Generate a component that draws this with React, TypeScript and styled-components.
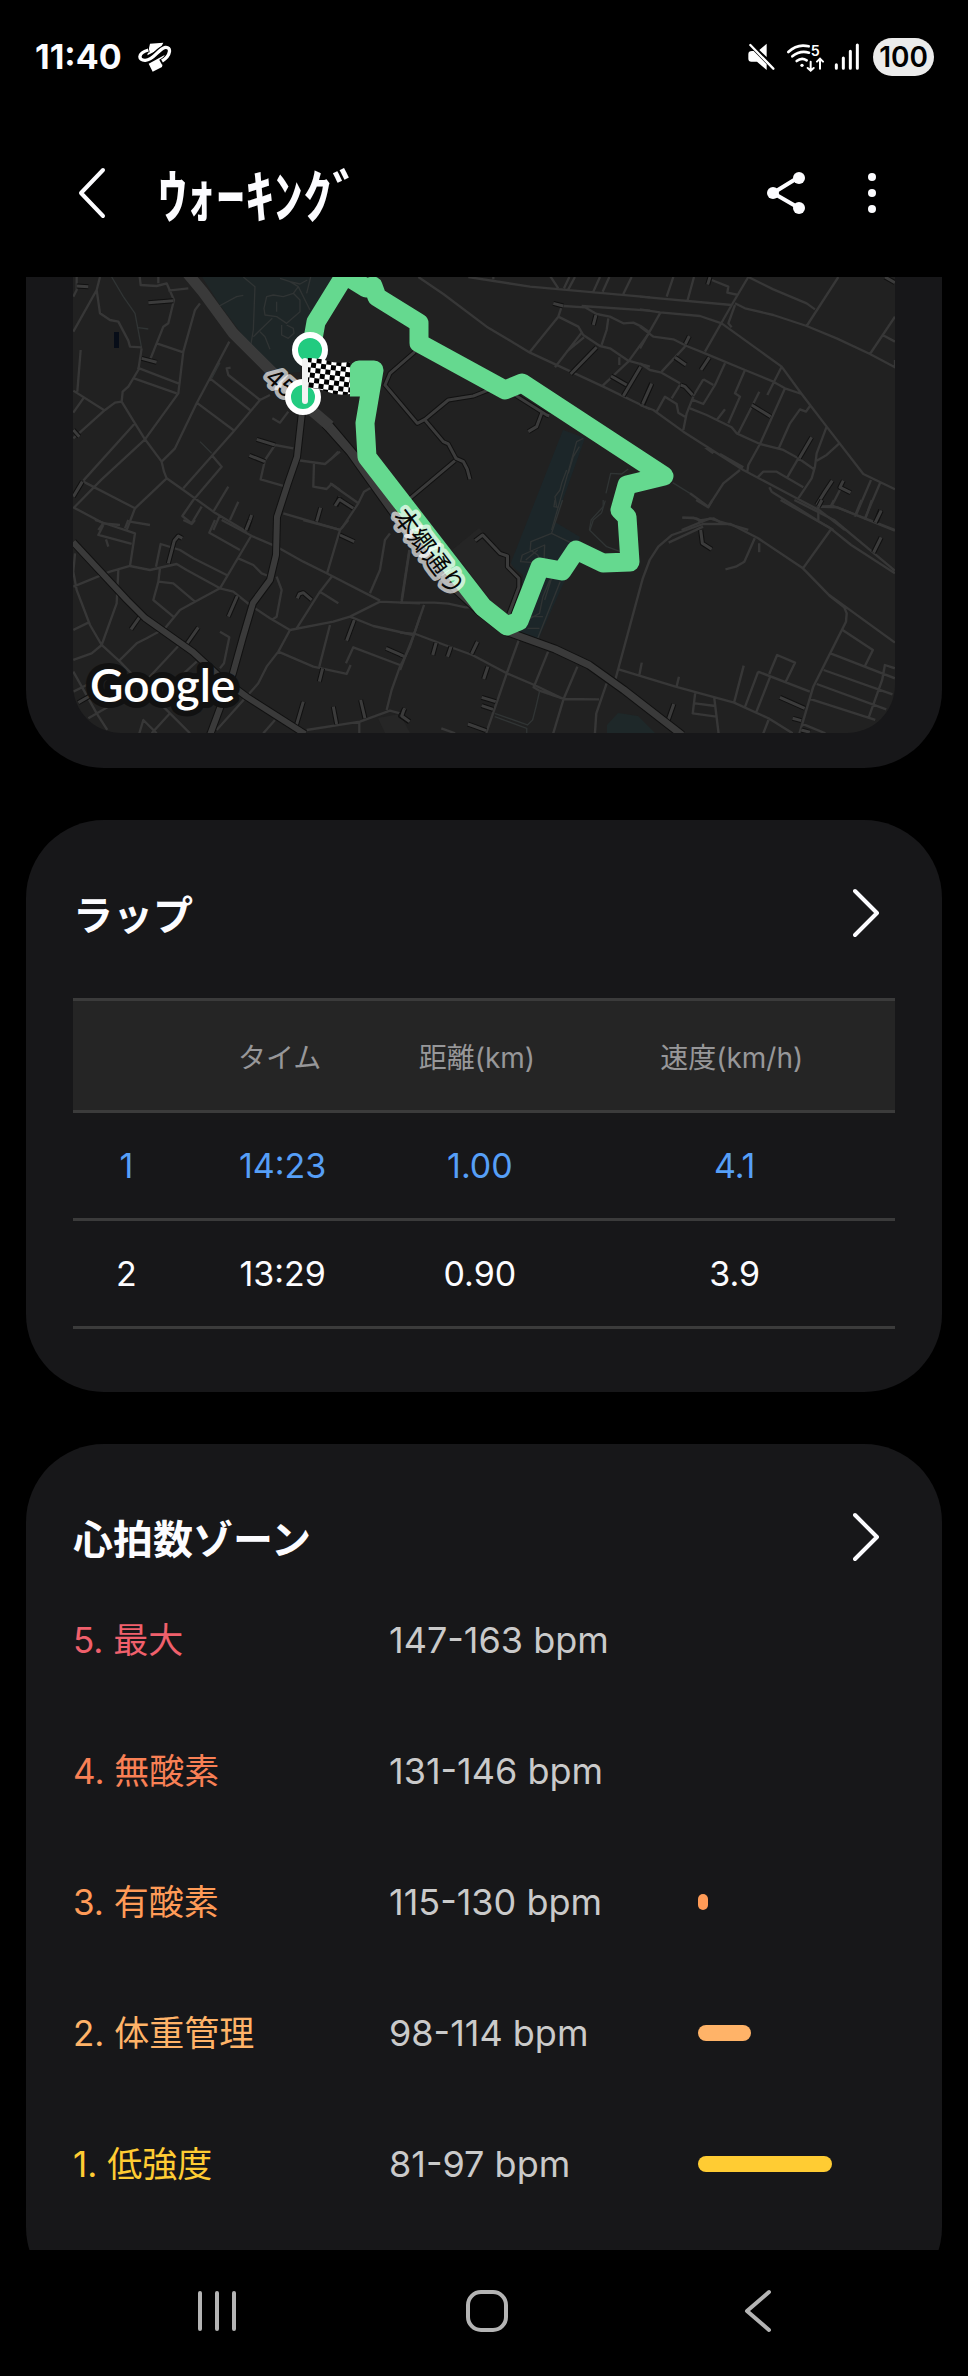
import React from "react";
import styled, { createGlobalStyle } from "styled-components";

const GlobalStyle = createGlobalStyle`
  *, *::before, *::after { box-sizing: border-box; }
  body {
    margin: 0;
    background: #000;
    color: #fcfcff;
    font-family: Inter, "Noto Sans CJK JP", sans-serif;
  }
`;

const Screen = styled.div`
  display: flex;
  flex-direction: column;
  height: 100vh;
  background: #000;
`;

const StatusBar = styled.div`
  display: flex;
  flex: none;
  align-items: center;
  justify-content: space-between;
  height: 114px;
  padding: 0 34px 0 35px;
`;

const StatusGroup = styled.div<{ $gap: number }>`
  display: flex;
  align-items: center;
  gap: ${({ $gap }) => $gap}px;
`;

const Clock = styled.time`
  font-size: 34px;
  font-weight: 700;
  line-height: 40px;
`;

const Battery = styled.span`
  margin-left: 3px;
  padding: 0 6px;
  border-radius: 19px;
  background: #ebebeb;
  color: #000;
  font-size: 28px;
  font-weight: 600;
  line-height: 38px;
`;

const AppBar = styled.header`
  display: flex;
  flex: none;
  align-items: center;
  height: 163px;
  padding: 0 68px 5px 64px;
`;

const Title = styled.h1`
  flex: 1;
  margin: 0 0 0 38px;
  font-family: "Noto Sans CJK JP", sans-serif;
  font-size: 58px;
  font-weight: 700;
  line-height: 80px;
`;

const IconButton = styled.button`
  display: flex;
  align-items: center;
  justify-content: center;
  min-width: 56px;
  height: 75px;
  padding: 0;
  border: 0;
  background: none;
  color: inherit;
`;

const Actions = styled.div`
  display: flex;
  gap: 30px;
`;

const Content = styled.main`
  display: flex;
  flex: 1;
  flex-direction: column;
  gap: 52px;
  min-height: 0;
  padding: 0 26px;
  overflow-y: auto;
  scrollbar-width: none;
`;

const Card = styled.section<{ $bottom: number; $openTop?: boolean }>`
  flex: none;
  padding: 0 47px ${({ $bottom }) => $bottom}px;
  border-radius: ${({ $openTop }) => ($openTop ? "0 0 78px 78px" : "78px")};
  background: #171719;
`;

const CardHeader = styled.div`
  display: flex;
  align-items: center;
  justify-content: space-between;
  height: 130px;
  padding-top: 55px;
`;

const CardTitle = styled.h2`
  margin: 0;
  font-family: "Noto Sans CJK JP", sans-serif;
  font-size: 40px;
  font-weight: 700;
  line-height: 60px;
`;

const MapDrawing = styled.svg`
  display: block;
  width: 100%;
  border-radius: 0 0 48px 48px;
  background: #212121;
`;

const LapTable = styled.table`
  width: 100%;
  margin-top: 48px;
  border-top: 3px solid #3b3b3b;
  border-spacing: 0;
  table-layout: fixed;
`;

const HeadCell = styled.th<{ $share: number }>`
  width: ${({ $share }) => $share}%;
  height: 112px;
  padding: 0 6px 0 0;
  border-bottom: 3px solid #3b3b3b;
  background: #252525;
  color: #979799;
  font-size: 28px;
  font-weight: 400;
`;

const LapRow = styled.tr<{ $best: boolean }>`
  color: ${({ $best }) => ($best ? "#569ff7" : "#fcfcff")};
`;

const LapCell = styled.td`
  height: 108px;
  padding: 0;
  border-bottom: 3px solid #3b3b3b;
  font-size: 34px;
  text-align: center;
`;

const ZoneList = styled.ul`
  margin: 0;
  padding: 0;
  list-style: none;
`;

const ZoneRow = styled.li`
  display: grid;
  grid-template-columns: 316fr 309fr 197fr;
  align-items: center;
  height: 131px;
  font-size: 35px;
  line-height: 52px;
`;

const ZoneName = styled.span<{ $color: string }>`
  color: ${({ $color }) => $color};
`;

const ZoneRange = styled.span`
  color: #cacaca;
  font-size: 36px;
`;

const ZoneBar = styled.span<{ $color: string }>`
  height: 16px;
  border-radius: 8px;
  background: ${({ $color }) => $color};
`;

const NavBar = styled.nav`
  display: grid;
  flex: none;
  grid-template-columns: repeat(3, 1fr);
  align-items: center;
  justify-items: center;
  height: 126px;
  padding: 0 75px 4px 82px;
  color: #b4b4b4;
`;

const laps = [
  { n: 1, time: "14:23", distance: "1.00", speed: "4.1" },
  { n: 2, time: "13:29", distance: "0.90", speed: "3.9" },
];

const zones = [
  { name: "5. 最大", range: "147-163 bpm", color: "#f0606c", share: 0 },
  { name: "4. 無酸素", range: "131-146 bpm", color: "#f98055", share: 0 },
  { name: "3. 有酸素", range: "115-130 bpm", color: "#ff9b57", share: 5 },
  { name: "2. 体重管理", range: "98-114 bpm", color: "#ffb368", share: 27 },
  { name: "1. 低強度", range: "81-97 bpm", color: "#ffcc33", share: 68 },
];

interface Tile {
  transform: string;
  streets: string;
  alleys: string;
  paths?: string;
}

const tiles: Tile[] = [
  {
    transform: "translate(20 270) scale(.3333)",
    streets:
      "M240 21L230 60L240 130L270 150L295 155L325 212L330 230L365 232M170 10V60L160 80M230 60L160 185M358 10L362 45L410 48L440 40L462 90L445 160L430 170L390 270M415 10V40M445 62L505 55M365 235L355 300L325 350L308 365L305 395L285 398L255 420L205 465L160 505M160 362L255 422M182 240L172 365M190 385L160 428M305 395L345 460L375 508L425 575L432 605L440 625L490 660L580 725L680 785M345 460L190 632M540 100L525 120L490 245L475 370L375 508L245 628L160 715M410 220L490 247M352 293L475 340M342 325L470 370M628 215L570 325L530 400L465 535L425 575M570 325L690 420M530 398L640 480M632 293L620 295L625 315L720 390M720 390L640 485L490 655M750 375L720 390M190 635L345 715L320 780M440 625L345 715M160 712L250 760L300 765M575 555L605 590L520 690L487 738L515 760L545 710M580 725L625 650M630 750L655 695M757 445L780 458L805 425M830 570L915 582L960 545M820 535L765 525L735 570L722 628L790 648M882 582L880 650L920 657L935 642L960 660M790 730L960 780M250 760L235 780M580 780L600 735",
    alleys:
      "M385 98L460 92M710 508L765 525M688 556L735 575M695 735L680 780M902 713L890 755M160 680L187 635M160 480L178 500M170 48L205 50M365 265L410 277M960 680L948 708",
    paths:
      "M275 21L310 80L345 130L365 235M355 173L385 177M670 21L705 50L700 180L692 228M598 108L650 80L670 76M740 80L760 75L790 80L820 70L840 90V125L800 160L770 140L735 135L732 115ZM770 95L770 125M757 145L700 200M720 185L735 200L750 238M785 165V195L805 205L822 190L820 175L800 165M780 25L810 35L835 50L870 120M860 70L872 21M820 70L835 50M600 278L575 325M540 515L575 550M862 30L840 42L810 35",
  },
  {
    transform: "translate(330 270) scale(.3333)",
    streets:
      "M265 21L340 72L470 170L600 248L820 350L960 418M415 21L600 50L960 82M490 10V28M755 108L960 122M700 108L765 112L800 132L840 140L880 160L910 158L935 170L960 188M695 110L685 140L600 245M685 140L745 170L760 195L810 228L840 235L895 272L960 290M755 188L675 292M762 202L710 245M835 145L830 180L815 225M958 188L895 275L815 350M868 262V285M655 10L685 55M718 21L702 55M735 21L715 58M810 21L790 65M838 21L818 65M905 21L880 72M0 640L85 700L102 665L125 652M85 700L35 775M0 570L25 545",
    alleys:
      "M255 245L180 310L165 345L245 440L262 460L285 448L355 390L430 378L480 358M285 450L340 515L355 522L378 565L400 575L412 598L420 628M375 572L240 685M555 375L650 435L658 438M635 430L620 470L595 485M15 708L28 688L70 715M670 100L700 108M800 232L722 312M843 318L890 345M932 290L880 378M798 135L790 165M965 340L938 405",
    paths:
      "M760 505L740 515L705 640L665 780M748 530L730 560L715 610M710 600L695 640L690 660L675 680L680 712M895 597L875 612L842 610L828 670M826 692L815 728L790 750L780 780",
  },
  {
    transform: "translate(640 270) scale(.3333)",
    streets:
      "M0 80L275 105M0 118L60 127L180 138L245 160L425 290L485 372L560 470L670 612L765 658M325 21L275 105L195 245M325 21L400 58L500 100L525 118M285 100L315 115L400 135L500 168L590 205L690 252L765 292V270M595 21L500 168M690 252L765 140M728 195L765 215M100 21L80 80M162 21L143 90M215 30L265 50L262 68L295 75M285 105L265 160L275 172M60 130L0 235M0 170L40 200L100 208L140 228L195 250L315 300L400 335L435 355L485 372M0 280L30 300L65 308L120 340M65 305L135 230M0 405L40 420L130 485L310 600L470 685L540 722L615 780M150 415L200 435L275 472L290 490L360 522L430 540L475 565L522 598M120 345L95 385M50 425L75 380L110 402L115 428L135 440M160 380L140 430L130 480M255 280L225 345L190 402L155 388M190 328L220 345M190 328L160 378M315 300L285 370L300 380L265 460M358 365L295 490M255 418L232 448M435 355L390 455L360 522L325 585L322 605M425 290L382 375M510 408L498 425L480 418L450 460L415 538M560 470L530 550L525 590L515 625L475 685M598 520L560 555L530 572M475 565L440 625M350 625L370 605L410 605L490 652M388 652L395 665L530 750L580 780M535 710L580 708L650 735L765 780M605 650L575 708M693 630L648 735M720 640L675 745M535 710V750M195 532L220 550M240 552L310 592M300 600L250 640L205 710L150 670M127 743L160 743L190 757M125 780L210 745L240 755L325 780",
    alleys:
      "M210 21L203 44M148 198L136 222M105 262L138 285M208 262L183 300M35 342L8 402M122 345L135 350L158 375M335 405L392 440M515 502L478 565M577 632L555 665L530 705M610 632L600 652L632 668M722 720L708 758M735 21L765 38",
    paths: "M150 670L98 638",
  },
  {
    transform: "translate(20 520) scale(.3333)",
    streets:
      "M160 200L270 155L330 138L390 150L470 132L500 150L600 205L640 215L690 255L750 295L810 330L940 305L990 290L1080 245L1200 250M165 100L160 155L170 210L210 315L245 375L300 425L400 530L510 640M295 150L290 250L245 375L215 400L160 420M160 330L205 308M250 15L235 45L335 72M225 0L345 40L330 138M325 0L315 25M330 5L390 15M258 58L265 80M408 140L422 72L480 90L520 115L620 165M420 145L415 185L400 240L460 290M415 185L460 190L525 245M600 205L525 245L480 270L435 325L380 355L350 370L295 425M475 378L380 480M530 425L470 480M600 335L628 352L612 430L600 445M600 205L695 45M605 0L700 50L770 80L850 125L920 160L1080 242M585 0L568 38L660 90M655 115L700 135L725 160L745 168M770 170L785 210L770 290L755 300M850 0L960 30L922 158M960 30L985 0M935 170L900 215L830 325M900 215L955 250M810 330L775 395L740 440L715 490L590 630M775 395L880 440L980 462L992 435M930 315L898 440M990 290L1060 318L1180 345M1110 40L1095 60L1080 150L1050 220M1168 90L1145 240M1200 290L1170 380L1140 440L1115 510L1100 570M978 430L1000 382L1140 435M860 630L1020 605L1110 572L1140 580M1018 605V640M730 640L765 600M160 455L230 580L262 630M205 595L300 540M358 640L370 600L410 640M395 640L450 580M160 515L230 480M490 0L515 12L525 0",
    alleys:
      "M487 55L475 48L463 62L445 130M690 0L678 30M652 228L625 290M535 322L498 375M360 290L333 328M832 235L838 222L850 218L875 240M960 45L1003 65M1003 300L980 362M1098 385L1150 408M908 445L898 485M850 545L828 620M940 560L950 612M1022 540L1035 595M1155 565L1142 588L1168 605M175 548L215 525",
  },
  {
    transform: "translate(400 500) scale(.3444 .3333)",
    streets:
      "M0 308H100L140 311L190 322L215 322M70 315L40 405L0 510M0 398L45 402L130 435L210 465L310 520L390 555L475 597L578 598M345 420L310 520L250 700M430 455L388 562L405 572L475 597M515 500L475 597L445 700M600 550L570 640L566 700M625 540L705 235L725 180L750 140L790 105L880 72L960 72L1040 115L1170 205L1250 290L1290 322L1297 340L1295 365L1200 560L1160 700M820 53L860 55L880 65M780 128L880 80M865 62L910 55L935 70M1240 280L1437 428M635 508L800 560L970 608L1070 655L1140 700M695 525L702 488M803 560L810 530M857 580L850 640L918 650M857 610L915 618M912 590L925 700M998 497L970 608M1040 515L1002 620M1040 515L1190 575M1075 530L1035 635M1072 522L1095 465L1147 488L1120 545M1285 390L1373 450L1350 498M1250 460L1437 535M1230 510L1430 583M1210 552L1412 628M1190 597L1380 660M1437 505L1408 495L1400 540L1360 655M1170 205L1250 90M1030 115L1000 185L975 200L945 208M1043 130V157M1105 0L1250 85L1310 135L1437 220M1145 0L1260 60L1437 212M1210 20L1270 22L1300 35L1437 92M860 0L895 22L907 0M1260 0L1250 20M1340 0L1320 50M1370 0L1350 60M1070 660L1055 700M1165 670L1235 700M28 150L5 305M120 685L160 700M0 465L12 470",
    alleys:
      "M873 90L878 130L905 148M218 122L240 105L290 160L312 168L312 200L345 235L345 262L315 345M105 428L95 465M148 440L138 470M225 425L208 462M255 500L243 537M237 592L278 605M237 617L270 628M197 672L250 692M12 628L5 648L28 665M795 612L777 665M1103 592L1175 625M1140 655L1165 662M1397 32L1380 68M1397 112L1375 158M1225 0L1215 20M1165 690L1190 697",
    paths:
      "M472 0L440 100L380 125L378 150L400 165L415 200M440 100L500 130M450 0L447 20L460 22M355 165L420 135L418 190L350 185ZM365 180L400 150M435 240L415 290L405 340L370 360M465 245L400 415M440 235L420 300M375 350H415M370 385H405M550 90L555 60L590 20V0M550 90L600 140L640 155M275 640L370 675L385 660L395 620L405 575M275 650L368 685V700",
  },
];

const AVENUE = "M183 268L203 292L233 333L270 370L303 403L330 426L357 458L395 515L440 575L480 612L505 631L555 649L589 665L624 690L682 735";
const AVENUE_FORK = "M325 424L350 452L395 515";
const WEST_AVENUE = "M73 542L127 600L145 618L193 652L220 677L247 697L305 734";
const SOUTH_ROAD = "M303 403L297 457L288 483L277 517L276 555L270 580L253 603L243 637L233 673L210 735";
const ROUTE =
  "M350 387L359 387L359 370L374 370L365 423L367 457L483 607L507 626L519 621L540 567L562 571L576 550L603 563L630 562L627 517L620 510L627 485L664 476L522 383L505 390L419 343L419 323L377 297L373 286L366 288L345 275L316 322L311 350";

function Chevron({ left = false, size = "card" }: { left?: boolean; size?: "card" | "bar" }) {
  const [w, h] = size === "card" ? [28, 50] : [28, 52];
  return (
    <svg width={w} height={h} viewBox={`0 0 ${w} ${h}`} fill="none" stroke="currentColor" strokeWidth="4" strokeLinecap="round" strokeLinejoin="round" aria-hidden="true">
      <path d={left ? `M${w - 3} 3L3 ${h / 2}L${w - 3} ${h - 3}` : `M2 3L${w - 4} ${h / 2}L2 ${h - 3}`} />
    </svg>
  );
}

function RouteMap() {
  return (
    <MapDrawing viewBox="73 277 822 456" role="img" aria-label="ルートマップ">
      <defs>
        <pattern id="checks" width="10" height="10" patternUnits="userSpaceOnUse" patternTransform="translate(307 357) rotate(7)">
          <rect width="10" height="10" fill="#fff" />
          <path d="M0 0H5V10H10V5H0Z" fill="#000" />
        </pattern>
      </defs>
      <path d="M202 277H335L307 332L300 372L280 374L250 345L220 305Z" fill="#1e2627" />
      <path d="M563 430L585 438L555 522L580 537L565 580L538 640L519 633L523 575L510 565Z" fill="#1c2629" />
      <path d="M607 733V725L618 713L638 716L655 733Z" fill="#1e2829" />
      <path d="M479 528L452 550L503 616L520 600L519 575L505 555Z" fill="#252525" />
      <path d="M378 718L400 714L410 733H385Z" fill="#262626" />
      <rect x="114" y="332" width="5" height="16" fill="#070d18" />
      {tiles.map((tile) => (
        <g key={tile.transform} transform={tile.transform} fill="none" strokeLinejoin="round">
          <path d={tile.paths} stroke="#303434" strokeWidth="4" />
          <path d={tile.streets} stroke="#373737" strokeWidth="7" />
          <path d={tile.alleys} stroke="#111" strokeWidth="15" />
          <path d={tile.alleys} stroke="#3b3b3b" strokeWidth="9" />
        </g>
      ))}
      <g fill="none" strokeLinejoin="round">
        <path d={`${SOUTH_ROAD}${WEST_AVENUE}`} stroke="#111" strokeWidth="8" />
        <path d={`${AVENUE}${AVENUE_FORK}`} stroke="#111" strokeWidth="9" />
        <path d={`${SOUTH_ROAD}${WEST_AVENUE}`} stroke="#3a3a3a" strokeWidth="6" />
        <path d={`${AVENUE}${AVENUE_FORK}`} stroke="#3a3a3a" strokeWidth="7" />
        <path d="M183 268L203 292L233 333L270 370L303 403L330 426" stroke="#3a3a3a" strokeWidth="11" />
        <path d={ROUTE} stroke="#65d98f" strokeWidth="19" />
      </g>
      <g fontFamily="Inter, 'Noto Sans CJK JP', sans-serif" fill="#080808" stroke="#fff" strokeOpacity=".68" strokeWidth="8" strokeLinejoin="round" paintOrder="stroke" textAnchor="middle">
        <text transform="translate(275 389) rotate(42)" fontSize="24">45</text>
        <text transform="translate(422 557) rotate(53)" fontSize="25">本郷通り</text>
      </g>
      <g stroke="#fff" strokeWidth="6" fill="#22cb80">
        <circle cx="310" cy="350" r="15" />
        <circle cx="303" cy="397" r="15" />
      </g>
      <path d="M308 358Q320 358 328 361T350 362V394Q338 396 328 392T308 388Z" fill="url(#checks)" />
      <path d="M305 361V401" stroke="#f2f2f2" strokeWidth="6" strokeLinecap="round" />
      <text x="90" y="702" fontFamily="Lato, sans-serif" fontSize="46" fontWeight="600" fill="#fff" stroke="#111" strokeWidth="12" strokeLinejoin="round" paintOrder="stroke">
        Google
      </text>
    </MapDrawing>
  );
}

function StatusIcons() {
  return (
    <StatusGroup $gap={10}>
      <svg width="30" height="32" viewBox="788 122 90 96" aria-label="ミュート">
        <path d="M795 162Q795 152 806 152H811L850 192V209L821 184H804Q795 184 795 175ZM828 149L850 130V170Z" fill="#fff" />
        <path d="M801 134L870 205" stroke="#fff" strokeWidth="7" strokeLinecap="round" />
      </svg>
      <svg width="38" height="32" viewBox="914 122 114 96" fill="none" stroke="#fff" strokeWidth="8" strokeLinecap="round" aria-label="Wi-Fi">
        <path d="M921 155Q948 129 982 138M933 168Q956 149 983 157M946 182Q961 170 976 180" />
        <circle cx="962" cy="195" r="5" fill="#fff" stroke="none" />
        <path d="M988 184V210M979 203L988 211L997 203M1016 205V176M1007 184L1016 175L1025 184" strokeWidth="6" />
        <text x="988" y="167" fontSize="43" fontWeight="600" fontFamily="Inter, sans-serif" fill="#fff" stroke="none">5</text>
      </svg>
      <svg width="26" height="32" viewBox="1052 122 78 96" stroke="#fff" strokeWidth="9" strokeLinecap="round" aria-label="電波強度">
        <path d="M1059 193V204M1080 173V204M1101 153V204M1122 134V204" />
      </svg>
      <Battery>100</Battery>
    </StatusGroup>
  );
}

export default function App() {
  return (
    <Screen>
      <GlobalStyle />
      <StatusBar>
        <StatusGroup $gap={16}>
          <Clock>11:40</Clock>
          <svg width="34" height="32" viewBox="408 122 102 96" fill="none" aria-hidden="true">
            <path d="M444 130L484 127L474 146L436 165ZM440 190L488 164L480 200L452 214Z" fill="#fff" />
            <path d="M441 147C400 157 404 182 428 181C455 178 464 150 490 142C512 139 508 168 476 186" stroke="#000" strokeWidth="18" />
            <path d="M439 149C406 158 408 181 430 180C457 178 468 146 490 141C508 139 508 164 480 182" stroke="#fff" strokeWidth="10" />
          </svg>
        </StatusGroup>
        <StatusIcons />
      </StatusBar>

      <AppBar>
        <IconButton aria-label="戻る">
          <Chevron left size="bar" />
        </IconButton>
        <Title>ｳｫｰｷﾝｸﾞ</Title>
        <Actions>
          <IconButton aria-label="共有">
            <svg width="40" height="44" viewBox="0 0 40 44" fill="#fcfcff" aria-hidden="true">
              <path d="M33 6L7 22L33 37" fill="none" stroke="#fcfcff" strokeWidth="4" />
              <circle cx="33" cy="7" r="6" />
              <circle cx="7" cy="22" r="6" />
              <circle cx="33" cy="37" r="6" />
            </svg>
          </IconButton>
          <IconButton aria-label="その他のオプション">
            <svg width="10" height="42" viewBox="0 0 10 42" fill="#fcfcff" aria-hidden="true">
              <circle cx="5" cy="5" r="4" />
              <circle cx="5" cy="21" r="4" />
              <circle cx="5" cy="37" r="4" />
            </svg>
          </IconButton>
        </Actions>
      </AppBar>

      <Content>
        <Card $bottom={35} $openTop>
          <RouteMap />
        </Card>

        <Card $bottom={63}>
          <CardHeader>
            <CardTitle>ラップ</CardTitle>
            <IconButton aria-label="ラップの詳細">
              <Chevron />
            </IconButton>
          </CardHeader>
          <LapTable>
            <thead>
              <tr>
                <HeadCell $share={13} aria-label="番号" />
                <HeadCell $share={25}>タイム</HeadCell>
                <HeadCell $share={23}>距離(km)</HeadCell>
                <HeadCell $share={39}>速度(km/h)</HeadCell>
              </tr>
            </thead>
            <tbody>
              {laps.map((lap) => (
                <LapRow key={lap.n} $best={lap.n === 1}>
                  <LapCell>{lap.n}</LapCell>
                  <LapCell>{lap.time}</LapCell>
                  <LapCell>{lap.distance}</LapCell>
                  <LapCell>{lap.speed}</LapCell>
                </LapRow>
              ))}
            </tbody>
          </LapTable>
        </Card>

        <Card $bottom={76}>
          <CardHeader>
            <CardTitle>心拍数ゾーン</CardTitle>
            <IconButton aria-label="心拍数ゾーンの詳細">
              <Chevron />
            </IconButton>
          </CardHeader>
          <ZoneList>
            {zones.map((zone) => (
              <ZoneRow key={zone.name}>
                <ZoneName $color={zone.color}>{zone.name}</ZoneName>
                <ZoneRange>{zone.range}</ZoneRange>
                {zone.share > 0 && <ZoneBar $color={zone.color} style={{ width: `${zone.share}%` }} />}
              </ZoneRow>
            ))}
          </ZoneList>
        </Card>
      </Content>

      <NavBar>
        <IconButton aria-label="最近使用したアプリ">
          <svg width="38" height="42" viewBox="0 0 38 42" stroke="currentColor" strokeWidth="4" strokeLinecap="round" aria-hidden="true">
            <path d="M2 3V39M19 3V39M36 3V39" />
          </svg>
        </IconButton>
        <IconButton aria-label="ホーム">
          <svg width="44" height="44" viewBox="0 0 44 44" fill="none" stroke="currentColor" strokeWidth="4" aria-hidden="true">
            <rect x="3" y="3" width="38" height="38" rx="13" />
          </svg>
        </IconButton>
        <IconButton aria-label="戻る">
          <svg width="28" height="44" viewBox="0 0 28 44" fill="none" stroke="currentColor" strokeWidth="4" strokeLinecap="round" strokeLinejoin="round" aria-hidden="true">
            <path d="M25 3L3 22L25 41" />
          </svg>
        </IconButton>
      </NavBar>
    </Screen>
  );
}
